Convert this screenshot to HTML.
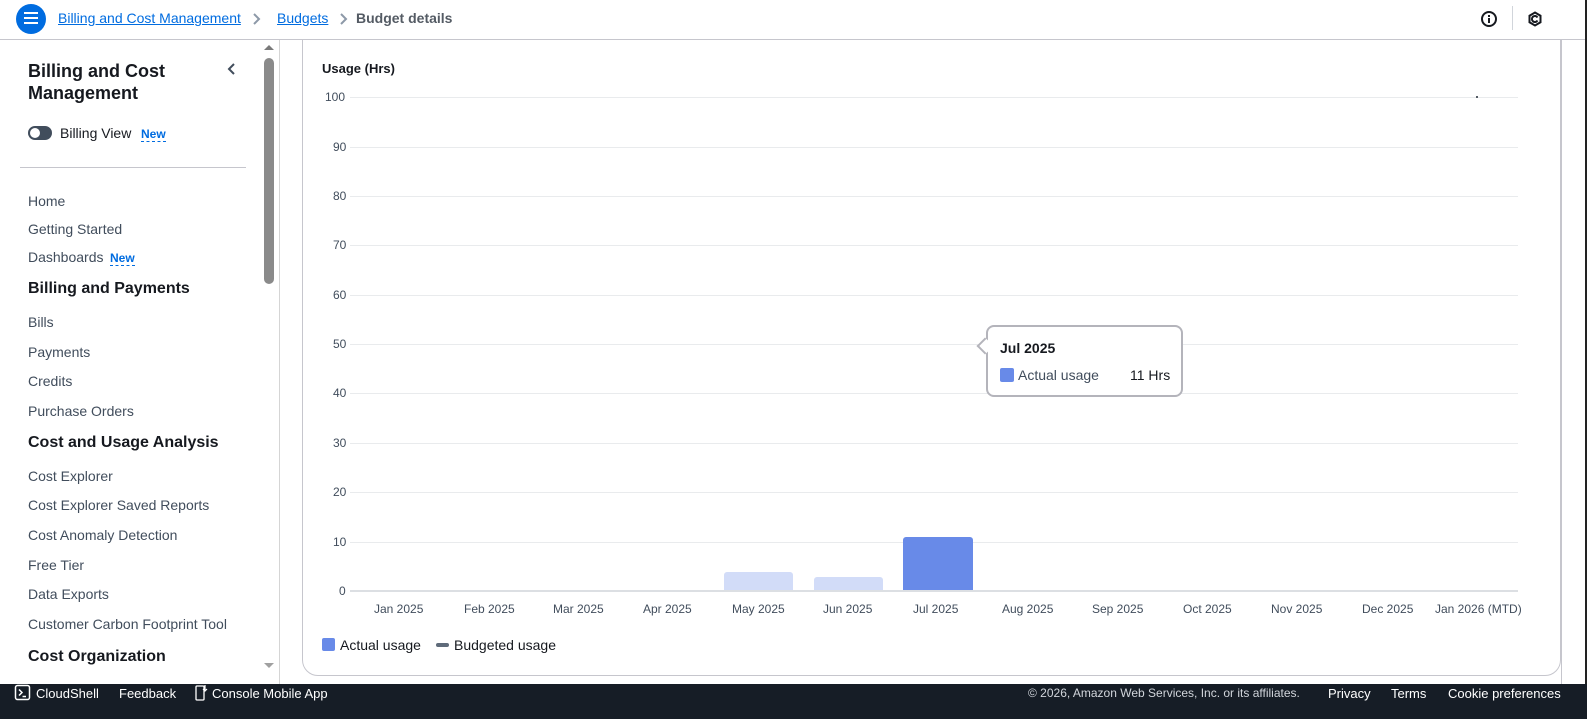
<!DOCTYPE html>
<html><head><meta charset="utf-8"><style>
*{box-sizing:border-box;margin:0;padding:0}
body{width:1587px;height:719px;overflow:hidden;font-family:"Liberation Sans",sans-serif;background:#fff;color:#16191f;position:relative}
.a{position:absolute;white-space:nowrap}
.nav{font-size:14px;color:#414d5c}
.h{font-size:16px;font-weight:bold;color:#16191f}
.ax{font-size:12px;color:#414d5c}
.grid{position:absolute;left:350px;width:1168px;height:1px;background:#e9ebed}
.ft{font-size:13px;color:#fff}
</style></head><body>
<!-- sidebar -->
<div class="a" style="left:28px;top:60px;font-size:18px;font-weight:bold;line-height:22px">Billing and Cost<br>Management</div>
<svg class="a" style="left:226px;top:62px" width="12" height="14" viewBox="0 0 12 14"><path d="M8 2L3 7L8 12" fill="none" stroke="#414d5c" stroke-width="2"/></svg>
<div class="a" style="left:28px;top:126px;width:24px;height:14px;border-radius:7px;background:#414d5c"></div>
<div class="a" style="left:30px;top:128px;width:10px;height:10px;border-radius:50%;background:#fff"></div>
<div class="a" style="left:60px;top:125px;font-size:14px;color:#16191f">Billing View</div>
<div class="a" style="left:141px;top:127px;font-size:12px;font-weight:bold;color:#006ce0;border-bottom:1px dashed #006ce0">New</div>
<div class="a" style="left:20px;top:167px;width:226px;height:1px;background:#c6c6cd"></div>
<div class="a nav" style="left:28px;top:193px">Home</div>
<div class="a nav" style="left:28px;top:221px">Getting Started</div>
<div class="a nav" style="left:28px;top:249px">Dashboards</div>
<div class="a" style="left:110px;top:251px;font-size:12px;font-weight:bold;color:#006ce0;border-bottom:1px dashed #006ce0">New</div>
<div class="a h" style="left:28px;top:280px">Billing and Payments</div>
<div class="a nav" style="left:28px;top:314px">Bills</div>
<div class="a nav" style="left:28px;top:344px">Payments</div>
<div class="a nav" style="left:28px;top:373px">Credits</div>
<div class="a nav" style="left:28px;top:403px">Purchase Orders</div>
<div class="a h" style="left:28px;top:434px">Cost and Usage Analysis</div>
<div class="a nav" style="left:28px;top:468px">Cost Explorer</div>
<div class="a nav" style="left:28px;top:497px">Cost Explorer Saved Reports</div>
<div class="a nav" style="left:28px;top:527px">Cost Anomaly Detection</div>
<div class="a nav" style="left:28px;top:557px">Free Tier</div>
<div class="a nav" style="left:28px;top:586px">Data Exports</div>
<div class="a nav" style="left:28px;top:616px">Customer Carbon Footprint Tool</div>
<div class="a h" style="left:28px;top:648px">Cost Organization</div>
<div class="a" style="left:264px;top:45px;width:0;height:0;border:5px solid transparent;border-bottom-color:#7a7a7a;border-top:0"></div>
<div class="a" style="left:264px;top:58px;width:10px;height:226px;border-radius:5px;background:#8a8a8a"></div>
<div class="a" style="left:264px;top:663px;width:0;height:0;border:5px solid transparent;border-top-color:#a0a0a0;border-bottom:0"></div>
<div class="a" style="left:279px;top:40px;width:1px;height:644px;background:#d5d5d5"></div>

<!-- card -->
<div class="a" style="left:302px;top:20px;width:1259px;height:656px;border:1px solid #c6c6cd;border-radius:16px;background:#fff"></div>
<div class="a" style="left:1561px;top:40px;width:24px;height:644px;background:#fff;border-left:1px solid #c6c6cd"></div>
<div class="a" style="left:1585px;top:0;width:2px;height:719px;background:#222"></div>

<!-- top bar -->
<div class="a" style="left:0;top:0;width:1585px;height:40px;background:#fff;border-bottom:1px solid #c6c6cd"></div>
<div class="a" style="left:16px;top:4px;width:30px;height:30px;border-radius:50%;background:#006ce0"></div>
<div class="a" style="left:24px;top:12px;width:14px;height:2px;background:#fff;box-shadow:0 5px 0 #fff,0 10px 0 #fff"></div>
<div class="a" style="left:58px;top:10px;font-size:14px;color:#006ce0;text-decoration:underline">Billing and Cost Management</div>
<svg class="a" style="left:252px;top:12px" width="10" height="14" viewBox="0 0 10 14"><path d="M2 2L7 7L2 12" fill="none" stroke="#8d99a8" stroke-width="2"/></svg>
<div class="a" style="left:277px;top:10px;font-size:14px;color:#006ce0;text-decoration:underline">Budgets</div>
<svg class="a" style="left:339px;top:12px" width="10" height="14" viewBox="0 0 10 14"><path d="M2 2L7 7L2 12" fill="none" stroke="#8d99a8" stroke-width="2"/></svg>
<div class="a" style="left:356px;top:10px;font-size:14px;font-weight:bold;color:#545b64">Budget details</div>
<svg class="a" style="left:1480px;top:10px" width="18" height="18" viewBox="0 0 18 18"><circle cx="9" cy="9" r="7" fill="none" stroke="#16191f" stroke-width="2"/><rect x="8" y="8" width="2" height="5" fill="#16191f"/><rect x="8" y="5" width="2" height="2" fill="#16191f"/></svg>
<div class="a" style="left:1512px;top:6px;width:1px;height:24px;background:#d1d5db"></div>
<svg class="a" style="left:1527px;top:11px" width="16" height="16" viewBox="0 0 16 16"><path d="M8 1.5L13.5 4.7V11.3L8 14.5L2.5 11.3V4.7Z" fill="none" stroke="#16191f" stroke-width="2"/><path d="M10.5 6.5A3 3 0 1 0 10.5 9.5" fill="none" stroke="#16191f" stroke-width="2"/></svg>

<div class="a" style="left:322px;top:61px;font-size:13px;font-weight:bold">Usage (Hrs)</div>
<div class="grid" style="top:97px"></div><div class="a ax" style="left:325px;top:90px">100</div>
<div class="grid" style="top:147px"></div><div class="a ax" style="left:333px;top:140px">90</div>
<div class="grid" style="top:196px"></div><div class="a ax" style="left:333px;top:189px">80</div>
<div class="grid" style="top:245px"></div><div class="a ax" style="left:333px;top:238px">70</div>
<div class="grid" style="top:295px"></div><div class="a ax" style="left:333px;top:288px">60</div>
<div class="grid" style="top:344px"></div><div class="a ax" style="left:333px;top:337px">50</div>
<div class="grid" style="top:393px"></div><div class="a ax" style="left:333px;top:386px">40</div>
<div class="grid" style="top:443px"></div><div class="a ax" style="left:333px;top:436px">30</div>
<div class="grid" style="top:492px"></div><div class="a ax" style="left:333px;top:485px">20</div>
<div class="grid" style="top:542px"></div><div class="a ax" style="left:333px;top:535px">10</div>
<div class="a ax" style="left:339px;top:584px">0</div>
<div class="a" style="left:1476px;top:96px;width:2px;height:2px;background:#545b64"></div>
<div class="a" style="left:724px;top:572px;width:69px;height:19px;background:#d2dcf8;border-radius:3px 3px 0 0"></div>
<div class="a" style="left:814px;top:577px;width:69px;height:14px;background:#d2dcf8;border-radius:3px 3px 0 0"></div>
<div class="a" style="left:903px;top:537px;width:70px;height:54px;background:#688ae8;border-radius:3px 3px 0 0"></div>
<div class="a" style="left:350px;top:590px;width:1168px;height:2px;background:#dcdfe3"></div>
<div class="a ax" style="left:374px;top:602px">Jan 2025</div>
<div class="a ax" style="left:464px;top:602px">Feb 2025</div>
<div class="a ax" style="left:553px;top:602px">Mar 2025</div>
<div class="a ax" style="left:643px;top:602px">Apr 2025</div>
<div class="a ax" style="left:732px;top:602px">May 2025</div>
<div class="a ax" style="left:823px;top:602px">Jun 2025</div>
<div class="a ax" style="left:913px;top:602px">Jul 2025</div>
<div class="a ax" style="left:1002px;top:602px">Aug 2025</div>
<div class="a ax" style="left:1092px;top:602px">Sep 2025</div>
<div class="a ax" style="left:1183px;top:602px">Oct 2025</div>
<div class="a ax" style="left:1271px;top:602px">Nov 2025</div>
<div class="a ax" style="left:1362px;top:602px">Dec 2025</div>
<div class="a ax" style="left:1435px;top:602px">Jan 2026 (MTD)</div>
<div class="a" style="left:322px;top:638px;width:13px;height:13px;background:#688ae8;border-radius:2px"></div>
<div class="a" style="left:340px;top:637px;font-size:14px">Actual usage</div>
<div class="a" style="left:436px;top:643px;width:13px;height:4px;background:#5f6b7a;border-radius:2px"></div>
<div class="a" style="left:454px;top:637px;font-size:14px">Budgeted usage</div>
<div class="a" style="left:986px;top:325px;width:197px;height:72px;border:2px solid #b4b4bb;border-radius:8px;background:#fff"></div>
<div class="a" style="left:979px;top:340px;width:12px;height:12px;background:#fff;border-left:2px solid #b4b4bb;border-bottom:2px solid #b4b4bb;transform:rotate(45deg)"></div>
<div class="a" style="left:1000px;top:340px;font-size:14px;font-weight:bold">Jul 2025</div>
<div class="a" style="left:1000px;top:368px;width:14px;height:14px;background:#688ae8;border-radius:2px"></div>
<div class="a" style="left:1018px;top:367px;font-size:14px;color:#414d5c">Actual usage</div>
<div class="a" style="left:1130px;top:367px;font-size:14px">11 Hrs</div>

<!-- footer -->
<div class="a" style="left:0;top:684px;width:1587px;height:35px;background:#161d26"></div>
<svg class="a" style="left:14px;top:684px" width="18" height="18" viewBox="0 0 18 18"><rect x="1.5" y="1.5" width="14" height="14" rx="2" fill="none" stroke="#fff" stroke-width="1.5"/><path d="M5 5.5L8 8.5L5 11.5M8.5 12.5H12" fill="none" stroke="#fff" stroke-width="1.5"/></svg>
<div class="a ft" style="left:36px;top:686px">CloudShell</div>
<div class="a ft" style="left:119px;top:686px">Feedback</div>
<svg class="a" style="left:194px;top:684px" width="14" height="18" viewBox="0 0 14 18"><rect x="2" y="2" width="8" height="14" rx="1" fill="none" stroke="#fff" stroke-width="1.3"/><path d="M11 1V7M9 5L11 7L13 5" fill="none" stroke="#fff" stroke-width="1.2"/></svg>
<div class="a ft" style="left:212px;top:686px">Console Mobile App</div>
<div class="a ft" style="left:1028px;top:686px;font-size:12px;color:#d1d5db">© 2026, Amazon Web Services, Inc. or its affiliates.</div>
<div class="a ft" style="left:1328px;top:686px">Privacy</div>
<div class="a ft" style="left:1391px;top:686px">Terms</div>
<div class="a ft" style="left:1448px;top:686px">Cookie preferences</div>
</body></html>
